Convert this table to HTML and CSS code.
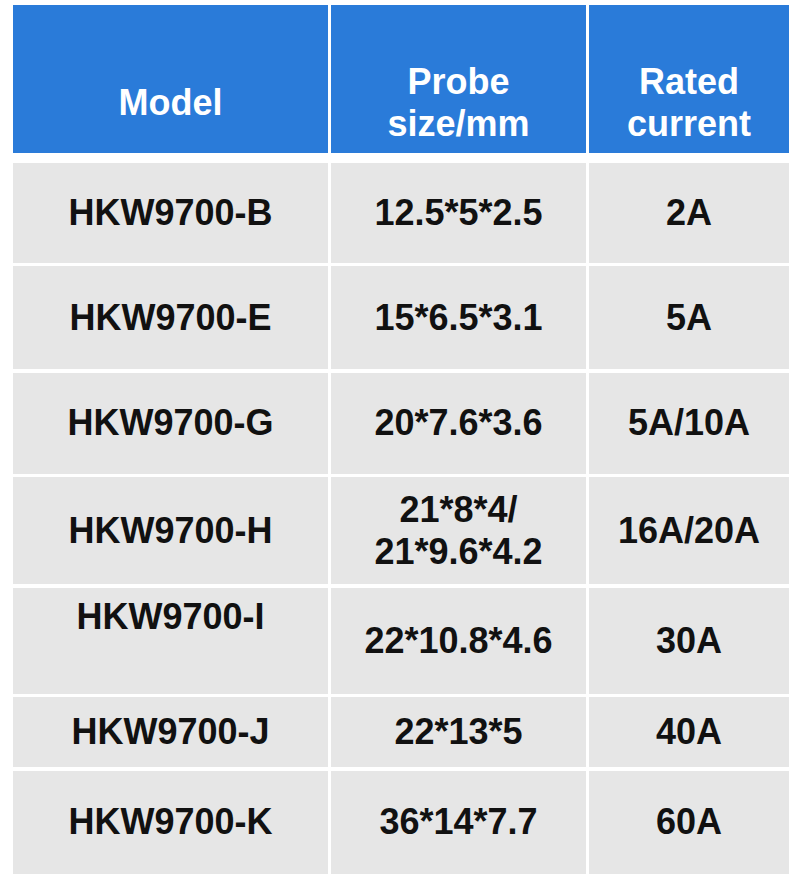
FILE: index.html
```html
<!DOCTYPE html>
<html>
<head>
<meta charset="utf-8">
<link rel="stylesheet" href="styles.css">
</head>
<body>
<div class="table">
  <div class="cell head"><span>Model</span></div>
  <div class="cell head"><span>Probe<br>size/mm</span></div>
  <div class="cell head"><span>Rated<br>current</span></div>

  <div class="cell">HKW9700-B</div>
  <div class="cell">12.5*5*2.5</div>
  <div class="cell">2A</div>

  <div class="cell">HKW9700-E</div>
  <div class="cell">15*6.5*3.1</div>
  <div class="cell">5A</div>

  <div class="cell">HKW9700-G</div>
  <div class="cell">20*7.6*3.6</div>
  <div class="cell">5A/10A</div>

  <div class="cell">HKW9700-H</div>
  <div class="cell">21*8*4/<br>21*9.6*4.2</div>
  <div class="cell">16A/20A</div>

  <div class="cell top">HKW9700-I</div>
  <div class="cell">22*10.8*4.6</div>
  <div class="cell">30A</div>

  <div class="cell">HKW9700-J</div>
  <div class="cell">22*13*5</div>
  <div class="cell">40A</div>

  <div class="cell">HKW9700-K</div>
  <div class="cell">36*14*7.7</div>
  <div class="cell">60A</div>
</div>
</body>
</html>
```
FILE: styles.css
```css
html, body {
  margin: 0;
  padding: 0;
  background: #ffffff;
}
body {
  padding: 5px 0 0 13px;
  font-family: "Liberation Sans", Arial, sans-serif;
  font-weight: bold;
}
.table {
  display: grid;
  grid-template-columns: 315px 255px 200px;
  grid-template-rows: 154px 100px 103px 101px 107px 106px 70px 103px;
  column-gap: 3px;
  row-gap: 3.5px;
}
.cell {
  background: #e6e6e6;
  color: #111111;
  font-size: 36px;
  line-height: 42px;
  display: flex;
  align-items: center;
  justify-content: center;
  text-align: center;
}
.head {
  background: #2a7bd9;
  color: #ffffff;
  align-items: flex-start;
  padding-top: 56px;
  box-sizing: border-box;
  margin-bottom: 6px;
}
.head span {
  display: block;
}
.head:first-child {
  padding-top: 77px;
}
.top {
  align-items: flex-start;
  padding-top: 8px;
  box-sizing: border-box;
}
```
